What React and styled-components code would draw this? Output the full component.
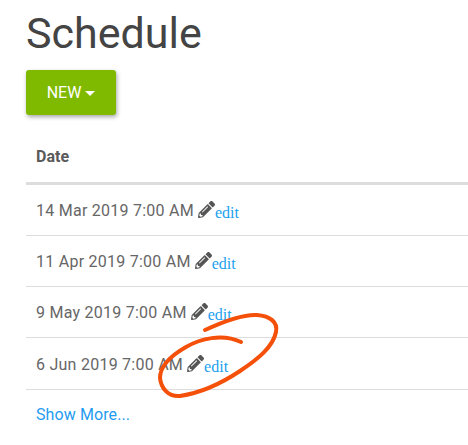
import React from 'react'
import styled, { createGlobalStyle } from 'styled-components'
import { FaPencilAlt } from 'react-icons/fa'

const GlobalStyle = createGlobalStyle`
  html, body {
    margin: 0;
    padding: 0;
    background: #fff;
    overflow: hidden;
  }
`

const Page = styled.div`
  position: relative;
  width: 468px;
  height: 445px;
  overflow: hidden;
  padding: 9px 0 0 26px;
  box-sizing: border-box;
  font-family: Roboto, "Liberation Sans", sans-serif;
  color: #555;
`

const Title = styled.h1`
  margin: 0 0 13px 0;
  font-size: 43px;
  line-height: 48px;
  font-weight: 400;
  color: #444;
`

const NewButton = styled.button`
  display: flex;
  align-items: center;
  justify-content: center;
  gap: 4px;
  width: 90px;
  height: 45px;
  padding: 0;
  border: 0;
  border-radius: 3px;
  background: #7fba00;
  color: #fff;
  font-family: inherit;
  font-size: 16px;
  box-shadow: 1px 2px 4px rgba(0, 0, 0, 0.35);
`

const Caret = styled.span`
  width: 0;
  height: 0;
  margin-top: 2px;
  border-left: 5px solid transparent;
  border-right: 5px solid transparent;
  border-top: 5px solid #fff;
`

const Table = styled.div`
  margin-top: 20px;
  width: 442px;
`

const HeadRow = styled.div`
  display: flex;
  align-items: center;
  height: 43px;
  padding: 0 0 4px 10px;
  border-bottom: 3px solid #ddd;
  font-size: 16px;
  font-weight: 700;
  color: #5a5a5a;
`

const Row = styled.div`
  display: flex;
  align-items: center;
  height: ${props => props.$height}px;
  box-sizing: border-box;
  padding: ${props => props.$drop || 0}px 0 0 10px;
  border-bottom: 1px solid #ddd;
  font-size: 16px;
  letter-spacing: 0.25px;
  color: #666;
`

const Pencil = styled(FaPencilAlt)`
  margin: -2px 0 0 4px;
  width: 17px;
  height: 17px;
  color: #555;
`

const EditLink = styled.a`
  margin: 5px 0 0 0;
  font-family: "Liberation Serif", serif;
  font-size: 16px;
  letter-spacing: 0;
  color: #1a9fee;
`

const ShowMore = styled.a`
  display: block;
  margin-top: 15px;
  padding-left: 10px;
  font-size: 16px;
  letter-spacing: 0.1px;
  color: #1f9cf0;
`

const Scribble = styled.svg`
  position: absolute;
  left: 0;
  top: 0;
  pointer-events: none;
`

const dates = [
  { label: '14 Mar 2019 7:00 AM', height: 51 },
  { label: '11 Apr 2019 7:00 AM', height: 51 },
  { label: '9 May 2019 7:00 AM', height: 51 },
  { label: '6 Jun 2019 7:00 AM', height: 52, drop: 2 },
]

export default function App() {
  return (
    <Page>
      <GlobalStyle />
      <Title>Schedule</Title>
      <NewButton>
        NEW <Caret />
      </NewButton>
      <Table>
        <HeadRow>Date</HeadRow>
        {dates.map(d => (
          <Row key={d.label} $height={d.height} $drop={d.drop}>
            {d.label}
            <Pencil />
            <EditLink>edit</EditLink>
          </Row>
        ))}
      </Table>
      <ShowMore>Show More...</ShowMore>
      <Scribble width="468" height="445" viewBox="0 0 468 445">
        <path
          d="M205 330 C218 324 240 314 257 315 C270 316 278 322 276 332 C273 347 258 359 240 371 C222 383 200 393 180 396 C168 397 161 388 160 378 C160 366 172 355 186 347 C200 339 222 333 241 342"
          fill="none"
          stroke="#f4500a"
          strokeWidth="4"
          strokeLinecap="round"
        />
      </Scribble>
    </Page>
  )
}
